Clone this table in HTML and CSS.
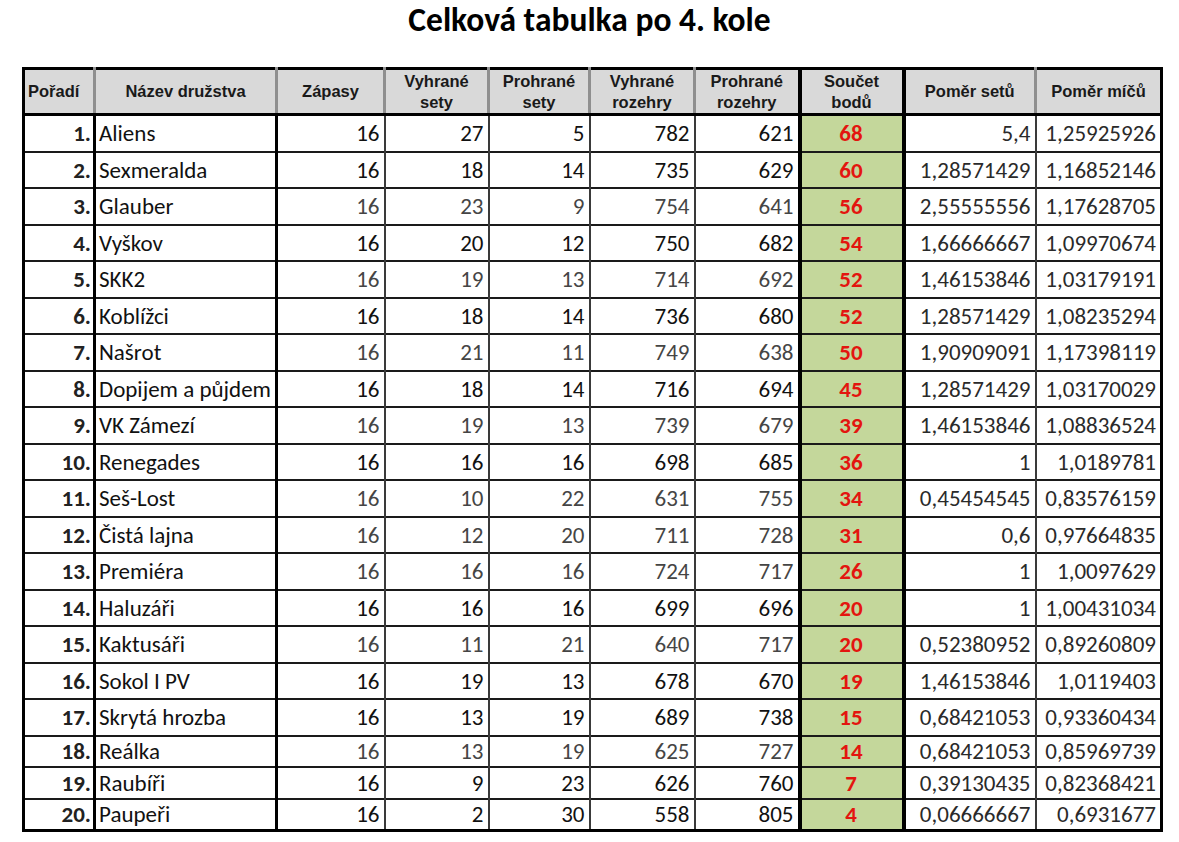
FILE: index.html
```html
<!DOCTYPE html>
<html lang="cs">
<head>
<meta charset="utf-8">
<title>Celková tabulka po 4. kole</title>
<link rel="stylesheet" href="styles.css">
</head>
<body>
<h1 class="title">Celková tabulka po 4. kole</h1>
<table class="standings">
<colgroup>
<col class="c-rank"><col class="c-name"><col class="c-n1"><col class="c-n2"><col class="c-n3"><col class="c-n4"><col class="c-n5"><col class="c-pts"><col class="c-r1"><col class="c-r2">
</colgroup>
<thead>
<tr>
<th class="h-rank">Pořadí</th>
<th class="h-name">Název družstva</th>
<th>Zápasy</th>
<th>Vyhrané<br>sety</th>
<th>Prohrané<br>sety</th>
<th>Vyhrané<br>rozehry</th>
<th>Prohrané<br>rozehry</th>
<th class="h-pts">Součet<br>bodů</th>
<th>Poměr setů</th>
<th>Poměr míčů</th>
</tr>
</thead>
<tbody>
<tr><td class="rank">1.</td><td class="name">Aliens</td><td class="num">16</td><td class="num">27</td><td class="num">5</td><td class="num">782</td><td class="num">621</td><td class="pts">68</td><td class="ratio">5,4</td><td class="ratio">1,25925926</td></tr>
<tr><td class="rank">2.</td><td class="name">Sexmeralda</td><td class="num">16</td><td class="num">18</td><td class="num">14</td><td class="num">735</td><td class="num">629</td><td class="pts">60</td><td class="ratio">1,28571429</td><td class="ratio">1,16852146</td></tr>
<tr class="dim"><td class="rank">3.</td><td class="name">Glauber</td><td class="num">16</td><td class="num">23</td><td class="num">9</td><td class="num">754</td><td class="num">641</td><td class="pts">56</td><td class="ratio">2,55555556</td><td class="ratio">1,17628705</td></tr>
<tr><td class="rank">4.</td><td class="name">Vyškov</td><td class="num">16</td><td class="num">20</td><td class="num">12</td><td class="num">750</td><td class="num">682</td><td class="pts">54</td><td class="ratio">1,66666667</td><td class="ratio">1,09970674</td></tr>
<tr class="dim"><td class="rank">5.</td><td class="name">SKK2</td><td class="num">16</td><td class="num">19</td><td class="num">13</td><td class="num">714</td><td class="num">692</td><td class="pts">52</td><td class="ratio">1,46153846</td><td class="ratio">1,03179191</td></tr>
<tr><td class="rank">6.</td><td class="name">Koblížci</td><td class="num">16</td><td class="num">18</td><td class="num">14</td><td class="num">736</td><td class="num">680</td><td class="pts">52</td><td class="ratio">1,28571429</td><td class="ratio">1,08235294</td></tr>
<tr class="dim"><td class="rank">7.</td><td class="name">Našrot</td><td class="num">16</td><td class="num">21</td><td class="num">11</td><td class="num">749</td><td class="num">638</td><td class="pts">50</td><td class="ratio">1,90909091</td><td class="ratio">1,17398119</td></tr>
<tr><td class="rank">8.</td><td class="name">Dopijem a půjdem</td><td class="num">16</td><td class="num">18</td><td class="num">14</td><td class="num">716</td><td class="num">694</td><td class="pts">45</td><td class="ratio">1,28571429</td><td class="ratio">1,03170029</td></tr>
<tr class="dim"><td class="rank">9.</td><td class="name">VK Zámezí</td><td class="num">16</td><td class="num">19</td><td class="num">13</td><td class="num">739</td><td class="num">679</td><td class="pts">39</td><td class="ratio">1,46153846</td><td class="ratio">1,08836524</td></tr>
<tr><td class="rank">10.</td><td class="name">Renegades</td><td class="num">16</td><td class="num">16</td><td class="num">16</td><td class="num">698</td><td class="num">685</td><td class="pts">36</td><td class="ratio">1</td><td class="ratio">1,0189781</td></tr>
<tr class="dim"><td class="rank">11.</td><td class="name">Seš-Lost</td><td class="num">16</td><td class="num">10</td><td class="num">22</td><td class="num">631</td><td class="num">755</td><td class="pts">34</td><td class="ratio">0,45454545</td><td class="ratio">0,83576159</td></tr>
<tr class="dim"><td class="rank">12.</td><td class="name">Čistá lajna</td><td class="num">16</td><td class="num">12</td><td class="num">20</td><td class="num">711</td><td class="num">728</td><td class="pts">31</td><td class="ratio">0,6</td><td class="ratio">0,97664835</td></tr>
<tr class="dim"><td class="rank">13.</td><td class="name">Premiéra</td><td class="num">16</td><td class="num">16</td><td class="num">16</td><td class="num">724</td><td class="num">717</td><td class="pts">26</td><td class="ratio">1</td><td class="ratio">1,0097629</td></tr>
<tr><td class="rank">14.</td><td class="name">Haluzáři</td><td class="num">16</td><td class="num">16</td><td class="num">16</td><td class="num">699</td><td class="num">696</td><td class="pts">20</td><td class="ratio">1</td><td class="ratio">1,00431034</td></tr>
<tr class="dim"><td class="rank">15.</td><td class="name">Kaktusáři</td><td class="num">16</td><td class="num">11</td><td class="num">21</td><td class="num">640</td><td class="num">717</td><td class="pts">20</td><td class="ratio">0,52380952</td><td class="ratio">0,89260809</td></tr>
<tr><td class="rank">16.</td><td class="name">Sokol I PV</td><td class="num">16</td><td class="num">19</td><td class="num">13</td><td class="num">678</td><td class="num">670</td><td class="pts">19</td><td class="ratio">1,46153846</td><td class="ratio">1,0119403</td></tr>
<tr><td class="rank">17.</td><td class="name">Skrytá hrozba</td><td class="num">16</td><td class="num">13</td><td class="num">19</td><td class="num">689</td><td class="num">738</td><td class="pts">15</td><td class="ratio">0,68421053</td><td class="ratio">0,93360434</td></tr>
<tr class="dim short"><td class="rank">18.</td><td class="name">Reálka</td><td class="num">16</td><td class="num">13</td><td class="num">19</td><td class="num">625</td><td class="num">727</td><td class="pts">14</td><td class="ratio">0,68421053</td><td class="ratio">0,85969739</td></tr>
<tr class="short"><td class="rank">19.</td><td class="name">Raubíři</td><td class="num">16</td><td class="num">9</td><td class="num">23</td><td class="num">626</td><td class="num">760</td><td class="pts">7</td><td class="ratio">0,39130435</td><td class="ratio">0,82368421</td></tr>
<tr class="short"><td class="rank">20.</td><td class="name">Paupeři</td><td class="num">16</td><td class="num">2</td><td class="num">30</td><td class="num">558</td><td class="num">805</td><td class="pts">4</td><td class="ratio">0,06666667</td><td class="ratio">0,6931677</td></tr>
</tbody>
</table>
</body>
</html>
```

FILE: styles.css
```css
html, body {
  margin: 0;
  padding: 0;
  background: #ffffff;
}

body {
  font-family: Carlito, Calibri, Lato, "Liberation Sans", sans-serif;
  color: #111111;
}

.title {
  margin: 0;
  padding-top: 0;
  height: 67px;
  box-sizing: border-box;
  text-align: center;
  font-size: 33.5px;
  font-weight: bold;
  line-height: 39px;
  color: #000000;
}

.standings {
  margin-left: 22px;
  border-collapse: collapse;
  table-layout: fixed;
  width: 1138px;
  border: 3px solid #000000;
}

.c-rank { width: 71px; }
.c-name { width: 182px; }
.c-n1 { width: 108px; }
.c-n2 { width: 104px; }
.c-n3 { width: 101px; }
.c-n4 { width: 105px; }
.c-n5 { width: 105px; }
.c-pts { width: 104px; }
.c-r1 { width: 132px; }
.c-r2 { width: 126px; }

.standings th {
  background: #d9d9d9;
  font-family: "Liberation Sans", Arial, sans-serif;
  font-size: 16.5px;
  font-weight: bold;
  line-height: 21px;
  color: #1a1a1a;
  height: 43px;
  padding: 0 2px;
  text-align: center;
  vertical-align: middle;
  border-left: 3px solid #8f8f8f;
  border-bottom: 3px solid #000000;
}

.standings th.h-rank {
  text-align: left;
  padding-left: 3px;
  border-left: 3px solid #000000;
}

.standings td {
  height: 34.5px;
  padding: 0 4px 0 3px;
  font-size: 23px;
  line-height: 26px;
  vertical-align: middle;
  border-top: 2px solid #1a1a1a;
  border-left: 2px solid #3a3a3a;
  white-space: nowrap;
  overflow: hidden;
}

.standings tr.short td {
  height: 29.5px;
}

.standings td.rank {
  text-align: right;
  font-weight: bold;
  color: #222222;
  border-left: 3px solid #000000;
  padding-right: 2px;
}

.standings td.name {
  text-align: left;
  border-left: 3px solid #000000;
  color: #111111;
}

.standings td.num {
  text-align: right;
}

.standings td.num:nth-child(3) {
  border-left: 3px solid #000000;
}

.standings tr.dim td.num {
  color: #454545;
}

.standings td.pts {
  background: #c4d79b;
  color: #e3150f;
  font-weight: bold;
  text-align: center;
  border-left: 4px solid #000000;
  border-right: 4px solid #000000;
}

.standings th.h-pts {
  border-left: 4px solid #000000;
  border-right: 4px solid #000000;
}

.standings td.ratio {
  text-align: right;
  color: #2a2a2a;
}
```
